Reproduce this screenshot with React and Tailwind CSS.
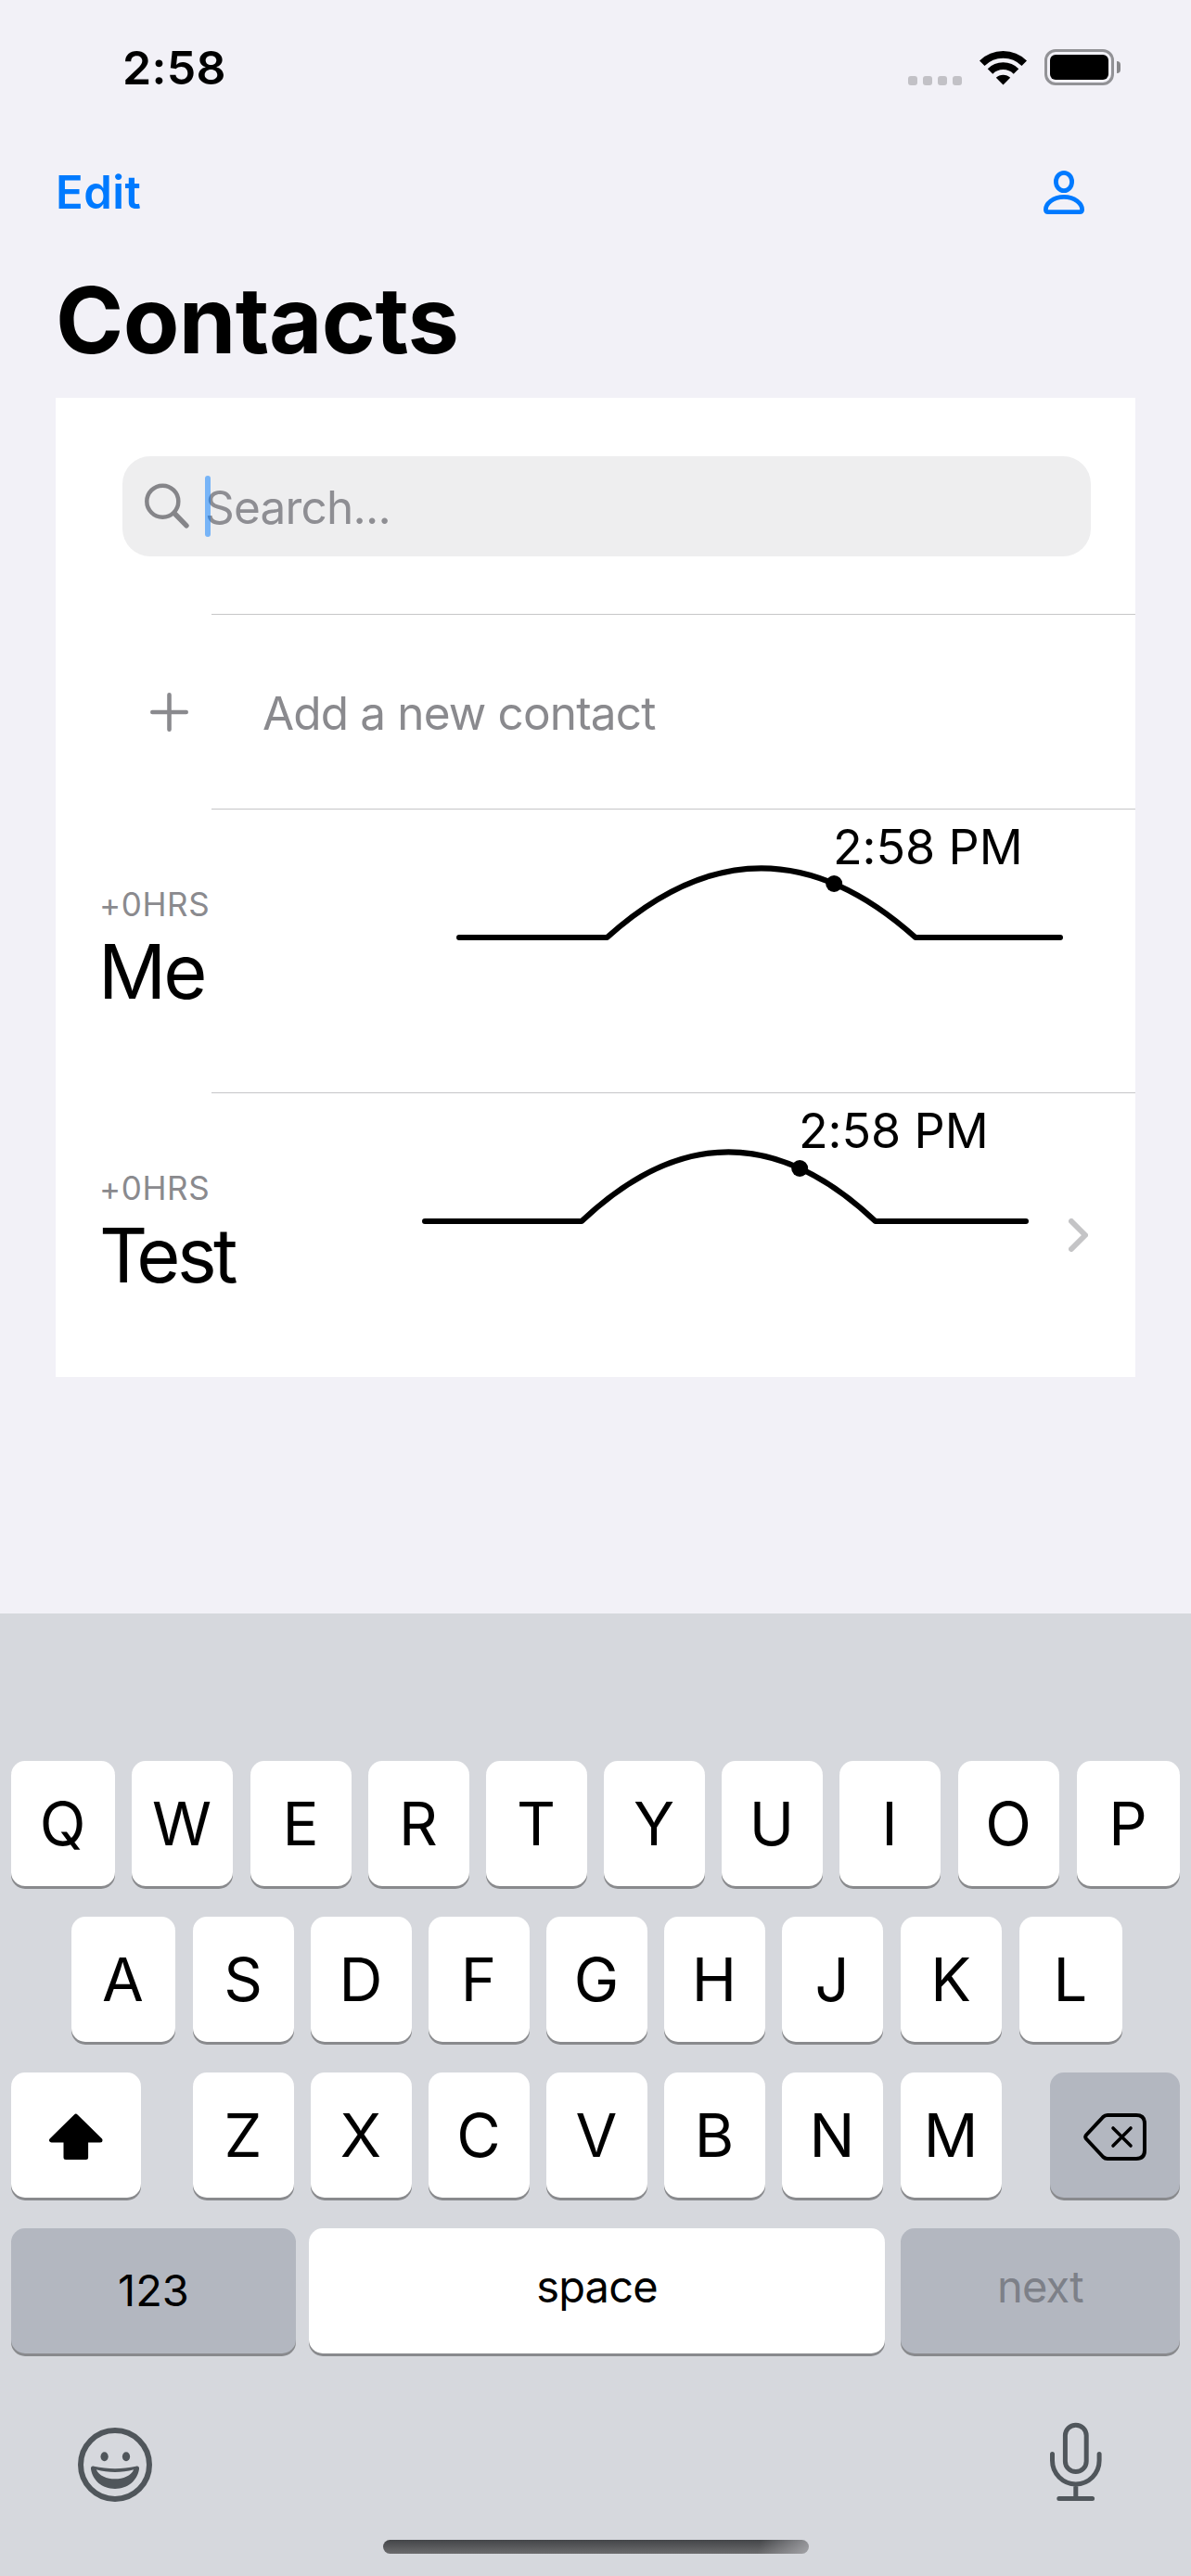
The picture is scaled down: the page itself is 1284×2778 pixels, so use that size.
import React from "react";

const KEY = "flex h-[135px] shrink-0 items-center justify-center rounded-[15px] shadow-[0_3px_0_#898a8d]";

function StatusBar() {
  return (
    <div className="flex h-[145px] items-center justify-between pr-[76px] pl-[132px]">
      <div className="text-[50px] leading-[60px] font-semibold tracking-[0.3px]">2:58</div>
      <div className="flex h-[39px] items-center">
        <div className="flex gap-1.5 self-end">
          <span className="size-2.5 rounded-[3px] bg-[#c2c1c6]" />
          <span className="size-2.5 rounded-[3px] bg-[#c2c1c6]" />
          <span className="size-2.5 rounded-[3px] bg-[#c2c1c6]" />
          <span className="size-2.5 rounded-[3px] bg-[#c2c1c6]" />
        </div>
        <svg className="ml-[19px]" width="51" height="38" viewBox="0 0 51 38" fill="none">
          <path d="M2.75 14.25a32.2 32.2 0 0 1 45.5 0" stroke="#000" strokeWidth="7.8" />
          <path d="M11.5 23a19.8 19.8 0 0 1 28 0" stroke="#000" strokeWidth="7.8" />
          <path d="M25.5 37.5L17.8 29.8a11 11 0 0 1 15.4 0z" fill="#000" />
        </svg>
        <div className="ml-[19px] h-[39px] w-[75px] rounded-[12px] border-3 border-[#929296] p-[3px]">
          <div className="h-full rounded-[6px] bg-black" />
        </div>
        <span className="ml-[3px] h-[13px] w-1 rounded-r-full bg-[#87878a]" />
      </div>
    </div>
  );
}

function NavBar() {
  return (
    <div className="flex h-[126px] items-center justify-between pr-[115px] pl-[60px] text-[#007aff]">
      <div className="text-[49px] leading-[60px] font-semibold tracking-[0.5px]">Edit</div>
      <svg className="mb-px" width="44" height="47" viewBox="0 0 44 47" fill="none" stroke="currentColor" strokeWidth="4.8">
        <ellipse cx="22" cy="12" rx="8.6" ry="9.6" />
        <path d="M22 28.4c-12 0-19.6 7.6-19.6 13.6 0 2 .9 2.6 2.6 2.6h34c1.7 0 2.6-.6 2.6-2.6 0-6-7.6-13.6-19.6-13.6z" />
      </svg>
    </div>
  );
}

function DayCurve({ rise, set, dotY }) {
  const mid = (rise + set) / 2;
  return (
    <div className="relative h-[305px] w-[654px]">
      <svg width="654" height="305" viewBox="0 0 654 305" fill="none">
        <path
          d={`M3 138H${rise}Q${mid} -11.4 ${set} 138H651`}
          stroke="#000"
          strokeWidth="6"
          strokeLinecap="round"
          strokeLinejoin="round"
        />
        <circle cx="407.2" cy={dotY} r="9" fill="#000" />
      </svg>
      <div className="absolute top-[11px] left-[406px] text-[52px] leading-[60px] tracking-[-0.1px] whitespace-nowrap">2:58 PM</div>
    </div>
  );
}

function Divider() {
  return <div className="ml-[168px] h-px bg-[#c6c6c8]" />;
}

function Offset() {
  return <div className="text-[35px] leading-[43px] tracking-[0.6px] text-[#8a8a8e]">+0HRS</div>;
}

function Contacts() {
  return (
    <div className="mx-[60px] bg-white pb-px">
      <div className="flex h-[233px] items-center pt-1 pr-12 pl-[72px]">
        <div className="mt-[-3px] flex h-[108px] w-full items-center rounded-[30px] bg-[#eeeeef] pl-6">
          <svg width="48" height="50" viewBox="0 0 48 50" fill="none" stroke="#858589">
            <circle cx="19.3" cy="19.7" r="17" strokeWidth="4.5" />
            <path d="M32 32.5L45 45.8" strokeWidth="5.4" strokeLinecap="round" />
          </svg>
          <div className="relative ml-[17px] flex h-[66px] items-center text-[49.5px] tracking-[-0.8px] text-[#8e8e93]">
            <span className="pt-px leading-[60px]">Search...</span>
            <span className="absolute inset-y-0 left-0 w-1.5 rounded-full bg-[#007aff]/50" />
          </div>
        </div>
      </div>
      <Divider />
      <div className="flex h-[209px] items-center pl-[102px] text-[#8a8a8e]">
        <svg width="41" height="42" viewBox="0 0 41 42" fill="none" stroke="currentColor" strokeWidth="4.6" strokeLinecap="round">
          <path d="M2.3 21h36.4M20.5 2.3v37.4" />
        </svg>
        <div className="ml-[80px] pt-[3px] text-[49.5px] leading-[60px] tracking-[-0.85px]">Add a new contact</div>
      </div>
      <Divider />
      <div className="flex h-[305px] items-center justify-between pr-[78px] pl-[47px]">
        <div className="flex flex-col gap-[3px] pb-px">
          <Offset />
          <div className="ml-[-1px] text-[81px] leading-[97px] tracking-[-3px]">Me</div>
        </div>
        <DayCurve rise={162.4} set={495} dotY={80} />
      </div>
      <Divider />
      <div className="flex h-[305px] items-center pr-[51px] pl-[47px]">
        <div className="flex flex-1 flex-col gap-[3px]">
          <Offset />
          <div className="text-[81px] leading-[97px] tracking-[-3.6px]">
            <span className="tracking-[-12px]">T</span>est
          </div>
        </div>
        <DayCurve rise={172} set={488.8} dotY={81} />
        <svg className="ml-[43px]" width="21" height="36" viewBox="0 0 21 36" fill="none" stroke="#c4c4c6" strokeWidth="6" strokeLinecap="round" strokeLinejoin="round">
          <path d="M3 3l15 15L3 33" />
        </svg>
      </div>
    </div>
  );
}

function Letter({ children, size = "w-[109px]", gap = "ml-[18px]" }) {
  return <div className={`${KEY} bg-white pr-px text-[65px] ${size} ${gap}`}>{children}</div>;
}

function Keyboard() {
  return (
    <div className="mt-auto h-[1038px] bg-[#d6d8dd] px-3 pt-[159px]">
      <div className="flex flex-col gap-[33px]">
        <div className="flex">
          <Letter size="w-[112px]" gap="ml-0">Q</Letter>
          <Letter>W</Letter>
          <Letter gap="ml-[19px]">E</Letter>
          <Letter>R</Letter>
          <Letter>T</Letter>
          <Letter>Y</Letter>
          <Letter>U</Letter>
          <Letter>I</Letter>
          <Letter gap="ml-[19px]">O</Letter>
          <Letter size="w-[111px]" gap="ml-[19px]">P</Letter>
        </div>
        <div className="flex pl-[65px]">
          <Letter size="w-[112px]" gap="ml-0">A</Letter>
          <Letter gap="ml-[19px]">S</Letter>
          <Letter>D</Letter>
          <Letter>F</Letter>
          <Letter>G</Letter>
          <Letter>H</Letter>
          <Letter>J</Letter>
          <Letter gap="ml-[19px]">K</Letter>
          <Letter size="w-[111px]" gap="ml-[19px]">L</Letter>
        </div>
        <div className="flex">
          <div className={`${KEY} w-[140px] bg-white pt-[3px]`}>
            <svg width="58" height="50" viewBox="0 0 58 50" stroke="#000" strokeWidth="5" strokeLinejoin="round">
              <path d="M28.8 3.2L2.6 29.1H18V47.5H39.6V29.1H55z" />
            </svg>
          </div>
          <Letter gap="ml-[56px]">Z</Letter>
          <Letter>X</Letter>
          <Letter>C</Letter>
          <Letter>V</Letter>
          <Letter>B</Letter>
          <Letter>N</Letter>
          <Letter gap="ml-[19px]">M</Letter>
          <div className={`${KEY} ml-[52px] w-[140px] bg-[#b3b7c0] pt-[3px]`}>
            <svg width="68" height="51" viewBox="0 0 68 51" fill="none" stroke="#000" strokeWidth="4" strokeLinecap="round" strokeLinejoin="round">
              <path d="M26 2H57q9 0 9 9v29q0 9-9 9H26q-2.8 0-4.8-2L3 27.5q-1.6-2 0-4L21.2 4q2-2 4.8-2z" />
              <path d="M32 16l19 19M51 16L32 35" strokeWidth="3.6" />
            </svg>
          </div>
        </div>
        <div className="flex">
          <div className={`${KEY} w-[307px] bg-[#b3b7c0] text-[47px]`}>123</div>
          <div className={`${KEY} ml-[14px] w-[621px] bg-white pb-[9px] text-[47px] tracking-[-0.8px]`}>space</div>
          <div className={`${KEY} ml-[17px] w-[301px] bg-[#b3b7c0] pb-[9px] text-[47px] tracking-[-0.8px] text-[#7d8088]`}>next</div>
        </div>
      </div>
      <div className="flex items-end justify-between pt-[74px] pr-[84px] pl-[72px]">
        <svg width="80" height="80" viewBox="0 0 80 80" fill="#50565b">
          <circle cx="40" cy="40" r="37" fill="none" stroke="#50565b" strokeWidth="6" />
          <ellipse cx="28.6" cy="31.3" rx="4.1" ry="5" />
          <ellipse cx="52" cy="31.3" rx="4.1" ry="5" />
          <path
            fillRule="evenodd"
            d="M17.5 41.7C14.8 40.9 13.6 42.5 14 44.8 16 57 26 66 40 66 54 66 64 57 66 44.8 66.4 42.5 65.2 40.9 62.5 41.7 48 45 32 45 17.5 41.7zM19.8 45.2C33 48.8 47 48.8 60.2 45.2 57 52 49 55.3 40 55.3 31 55.3 23 52 19.8 45.2z"
          />
        </svg>
        <svg width="56" height="86" viewBox="0 0 56 86" fill="none" stroke="#50565b" strokeWidth="5" strokeLinecap="round">
          <rect x="16.4" y="3.2" width="22.8" height="50.4" rx="11.4" />
          <path d="M2.5 34.5V41.6a25.3 25.3 0 0 0 50.6 0V34.5M27.8 67.5V82M9.8 82.4H45.6" />
        </svg>
      </div>
      <div className="mx-auto mt-[41px] h-[15px] w-[459px] rounded-full bg-[linear-gradient(100deg,transparent_88%,rgba(200,200,205,0.6)_100%),linear-gradient(to_bottom,#434548,#6c6c6e)]" />
    </div>
  );
}

export default function App() {
  return (
    <div className="flex h-[2778px] w-[1284px] flex-col overflow-hidden bg-[#f2f1f7] font-[Inter,sans-serif] text-black">
      <StatusBar />
      <NavBar />
      <h1 className="mb-[10px] h-[148px] pl-[60px] text-[99px] leading-[148px] font-bold tracking-[-0.6px]">Contacts</h1>
      <Contacts />
      <Keyboard />
    </div>
  );
}
